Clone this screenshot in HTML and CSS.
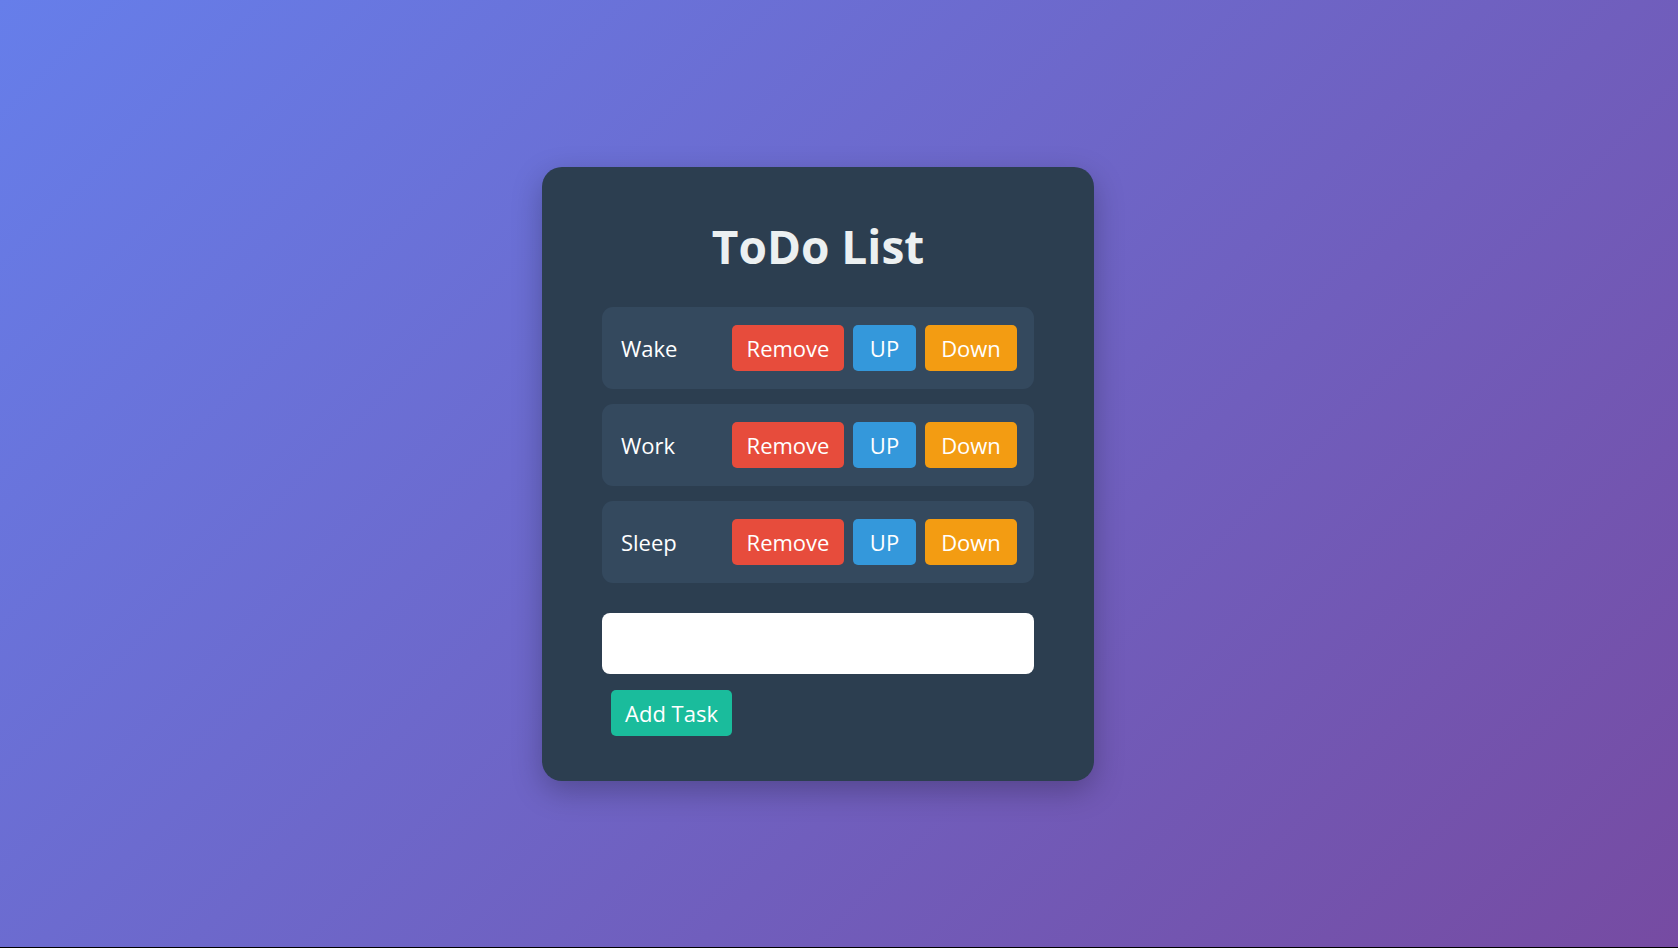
FILE: index.html
```html
<!DOCTYPE html>
<html lang="en">
<head>
<meta charset="utf-8">
<title>ToDo List</title>
<link rel="stylesheet" href="styles.css">
</head>
<body>
  <main class="card">
    <h1 class="title">ToDo List</h1>
    <ul class="tasks">
      <li class="task">
        <span class="task-name">Wake</span>
        <div class="actions">
          <button class="btn btn-remove">Remove</button>
          <button class="btn btn-up">UP</button>
          <button class="btn btn-down">Down</button>
        </div>
      </li>
      <li class="task">
        <span class="task-name">Work</span>
        <div class="actions">
          <button class="btn btn-remove">Remove</button>
          <button class="btn btn-up">UP</button>
          <button class="btn btn-down">Down</button>
        </div>
      </li>
      <li class="task">
        <span class="task-name">Sleep</span>
        <div class="actions">
          <button class="btn btn-remove">Remove</button>
          <button class="btn btn-up">UP</button>
          <button class="btn btn-down">Down</button>
        </div>
      </li>
    </ul>
    <div class="add-form">
      <input class="task-input" type="text">
      <button class="btn btn-add">Add Task</button>
    </div>
  </main>
</body>
</html>
```

FILE: styles.css
```css
* {
  box-sizing: border-box;
}

html {
  background: #000;
}

body {
  margin: 0;
  height: 947px;
  padding-right: 42px;
  display: flex;
  align-items: center;
  justify-content: center;
  background: linear-gradient(135deg, #667eea 0%, #764ba2 100%);
  font-family: "Open Sans", "Noto Sans", sans-serif;
}

.card {
  width: 552px;
  padding: 43px 60px 45px;
  background: #2c3e50;
  border-radius: 20px;
  box-shadow: 0 10px 30px rgba(0, 0, 0, 0.25);
  color: #ffffff;
}

.title {
  margin: 0 0 27px;
  padding-top: 2px;
  text-align: center;
  font-size: 46px;
  font-weight: 700;
  line-height: 68px;
  color: #ecf0f1;
}

.tasks {
  list-style: none;
  margin: 0;
  padding: 0;
  display: flex;
  flex-direction: column;
  gap: 15px;
}

.task {
  display: flex;
  align-items: center;
  height: 82px;
  padding: 0 17px 0 19px;
  background: #34495e;
  border-radius: 11px;
}

.task-name {
  flex: 1;
  font-size: 22px;
  color: #ffffff;
}

.actions {
  display: flex;
  gap: 9px;
}

.btn {
  height: 46px;
  padding: 0;
  border: none;
  border-radius: 5px;
  color: #ffffff;
  font-family: inherit;
  font-size: 22px;
  cursor: pointer;
}

.btn-remove {
  width: 112px;
  background: #e74c3c;
}

.btn-up {
  width: 63px;
  background: #3498db;
}

.btn-down {
  width: 92px;
  background: #f39c12;
}

.add-form {
  margin-top: 30px;
  display: flex;
  flex-direction: column;
  align-items: flex-start;
  gap: 16px;
}

.task-input {
  width: 100%;
  height: 61px;
  border: none;
  border-radius: 8px;
  background: #ffffff;
  padding: 0 15px;
  font-family: inherit;
  font-size: 20px;
}

.btn-add {
  width: 121px;
  margin-left: 9px;
  background: #1abc9c;
}
```
